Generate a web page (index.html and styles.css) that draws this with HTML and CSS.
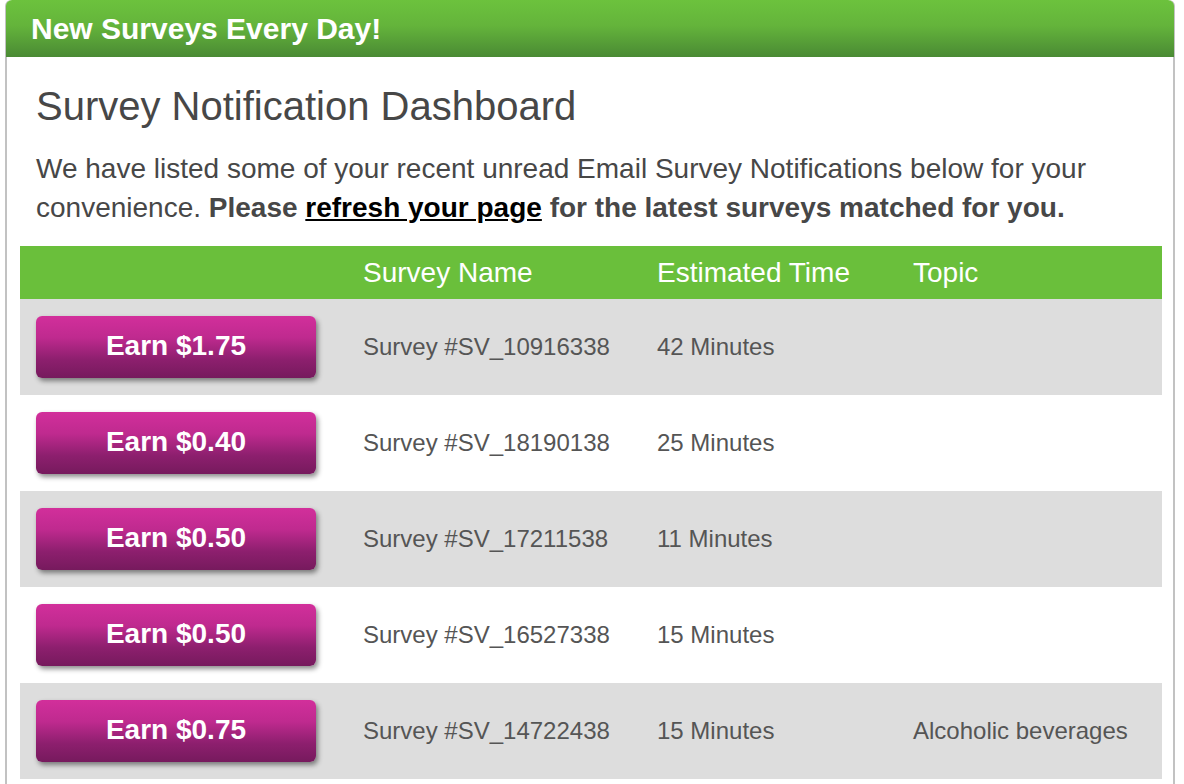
FILE: index.html
```html
<!DOCTYPE html>
<html>
  <head>
    <title>Survey Notification Dashboard</title>
    <link rel="stylesheet" href="styles.css">
  </head>
  <body>
    <div class="panel">
      <div class="panel-header">New Surveys Every Day!</div>
      <div class="panel-body">
        <h2>Survey Notification Dashboard</h2>
        <p>We have listed some of your recent unread Email Survey Notifications below for your convenience. <b>Please <a href="#">refresh your page</a> for the latest surveys matched for you.</b></p>

        <!-- Survey Table -->
        <table class="surveys">
          <thead>
            <tr>
              <th class="col-btn"></th>
              <th class="col-name">Survey Name</th>
              <th class="col-time">Estimated Time</th>
              <th>Topic</th>
            </tr>
          </thead>
          <tbody>
            <tr>
              <td><a class="earn-btn" href="#">Earn $1.75</a></td>
              <td>Survey #SV_10916338</td>
              <td>42 Minutes</td>
              <td></td>
            </tr>
            <tr>
              <td><a class="earn-btn" href="#">Earn $0.40</a></td>
              <td>Survey #SV_18190138</td>
              <td>25 Minutes</td>
              <td></td>
            </tr>
            <tr>
              <td><a class="earn-btn" href="#">Earn $0.50</a></td>
              <td>Survey #SV_17211538</td>
              <td>11 Minutes</td>
              <td></td>
            </tr>
            <tr>
              <td><a class="earn-btn" href="#">Earn $0.50</a></td>
              <td>Survey #SV_16527338</td>
              <td>15 Minutes</td>
              <td></td>
            </tr>
            <tr>
              <td><a class="earn-btn" href="#">Earn $0.75</a></td>
              <td>Survey #SV_14722438</td>
              <td>15 Minutes</td>
              <td>Alcoholic beverages</td>
            </tr>
          </tbody>
        </table>
      </div>
    </div>
  </body>
</html>
```

FILE: styles.css
```css
body {
  font-family: "Liberation Sans", Arial, sans-serif;
  background-color: #ffffff;
  margin: 0;
  padding: 0;
}
.panel {
  margin-left: 5px;
  width: 1166px;
  border: 2px solid #c2c2c2;
  border-top: none;
  border-radius: 6px 6px 0 0;
  background-color: #ffffff;
  min-height: 800px;
}
.panel-header {
  height: 57px;
  line-height: 57px;
  padding-left: 25px;
  margin: 0 -1px;
  border-radius: 6px 6px 0 0;
  background: linear-gradient(#6cc23d 0%, #64b43b 45%, #4a8a34 100%);
  color: #ffffff;
  font-size: 30px;
  font-weight: bold;
}
.panel-body {
  padding: 26px 11px 0 13px;
}
h2 {
  font-size: 40px;
  font-weight: normal;
  color: #474747;
  margin: 0 16px;
  line-height: 46px;
}
p {
  font-size: 28px;
  line-height: 39px;
  color: #474747;
  margin: 20px 16px 19px;
}
p a {
  color: #000000;
}
table.surveys {
  width: 1142px;
  border-collapse: collapse;
}
th, td {
  text-align: left;
  padding: 0 16px;
}
th {
  height: 53px;
  background-color: #6abf3b;
  color: #ffffff;
  font-size: 28px;
  font-weight: normal;
}
.col-btn {
  width: 295px;
}
.col-name {
  width: 262px;
}
.col-time {
  width: 224px;
}
td {
  height: 96px;
  font-size: 24px;
  color: #555555;
}
tbody tr:nth-child(odd) td {
  background-color: #dddddd;
}
.earn-btn {
  display: block;
  width: 280px;
  height: 62px;
  line-height: 60px;
  text-align: center;
  border-radius: 6px;
  background: linear-gradient(#d22f9b 0%, #bf2a8f 35%, #8d1f6e 70%, #761a5d 100%);
  box-shadow: 2px 3px 5px rgba(0, 0, 0, 0.45);
  color: #ffffff;
  font-size: 28px;
  font-weight: bold;
  text-decoration: none;
}
```
